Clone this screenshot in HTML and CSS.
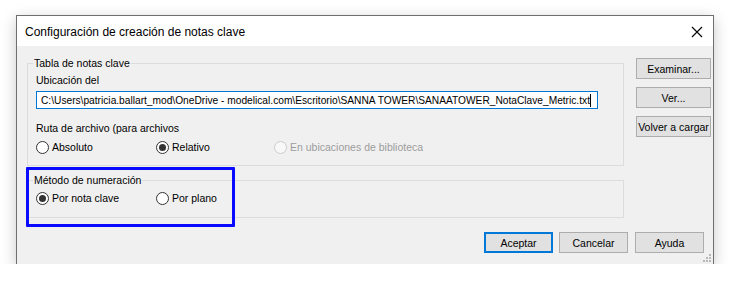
FILE: index.html
```html
<!DOCTYPE html>
<html lang="es">
<head>
    <meta charset="UTF-8">
    <title>Configuración de creación de notas clave</title>
    <link rel="stylesheet" href="styles.css">
</head>
<body>
    <div class="dialog">
        <div class="titlebar">
            <span class="title">Configuración de creación de notas clave</span>
            <svg class="close" width="12" height="12" viewBox="0 0 12 12">
                <path d="M1 1 L11 11 M11 1 L1 11" stroke="#000" stroke-width="1.1" fill="none"/>
            </svg>
        </div>

        <div class="body">
            <div class="main">
                <div class="left">
                    <fieldset class="group group-table">
                        <legend>Tabla de notas clave</legend>
                        <div class="label">Ubicación del</div>
                        <div class="path-input">C:\Users\patricia.ballart_mod\OneDrive - modelical.com\Escritorio\SANNA TOWER\SANAATOWER_NotaClave_Metric.txt<span class="caret"></span></div>
                        <div class="label label-gap">Ruta de archivo (para archivos</div>
                        <div class="radios">
                            <label class="radio"><span class="dot"></span>Absoluto</label>
                            <label class="radio checked"><span class="dot"></span>Relativo</label>
                            <label class="radio disabled"><span class="dot"></span>En ubicaciones de biblioteca</label>
                        </div>
                    </fieldset>

                    <fieldset class="group group-num">
                        <legend>Método de numeración</legend>
                        <div class="radios">
                            <label class="radio checked"><span class="dot"></span>Por nota clave</label>
                            <label class="radio"><span class="dot"></span>Por plano</label>
                        </div>
                    </fieldset>
                </div>

                <div class="side">
                    <button class="btn">Examinar...</button>
                    <button class="btn">Ver...</button>
                    <button class="btn">Volver a cargar</button>
                </div>
            </div>

            <div class="footer">
                <button class="btn btn-default">Aceptar</button>
                <button class="btn">Cancelar</button>
                <button class="btn">Ayuda</button>
            </div>

            <!-- marca de anotación -->
            <div class="highlight"></div>

            <svg class="grip" width="8" height="8" viewBox="0 0 8 8">
                <rect x="6" y="0" width="2" height="2" fill="#b8b8b8"/>
                <rect x="3" y="3" width="2" height="2" fill="#b8b8b8"/>
                <rect x="6" y="3" width="2" height="2" fill="#b8b8b8"/>
                <rect x="0" y="6" width="2" height="2" fill="#b8b8b8"/>
                <rect x="3" y="6" width="2" height="2" fill="#b8b8b8"/>
                <rect x="6" y="6" width="2" height="2" fill="#b8b8b8"/>
            </svg>
        </div>
    </div>
</body>
</html>
```

FILE: styles.css
```css
* {
    margin: 0;
    padding: 0;
    box-sizing: border-box;
}

body {
    font-family: 'Liberation Sans', Arial, sans-serif;
    font-size: 10.5px;
    line-height: 14px;
    color: #000;
    background: #fff;
    padding: 15px 0 0 16px;
}

.dialog {
    width: 698px;
    height: 249px;
    border: 1px solid #6f6f6f;
    border-bottom: none;
    background: #f0f0f0;
    box-shadow: 0 4px 14px rgba(0, 0, 0, 0.22);
    display: flex;
    flex-direction: column;
}

.titlebar {
    height: 30px;
    background: #fff;
    display: flex;
    align-items: center;
    justify-content: space-between;
    padding: 0 10px 0 8px;
}

.title {
    font-size: 12px;
    padding-top: 1px;
}

.close {
    margin-top: 1px;
}

.body {
    position: relative;
    flex: 1;
    padding: 10px 2px 0 10px;
}

.main {
    display: flex;
}

.left {
    width: 597px;
    min-width: 0;
}

.group {
    min-width: 0;
    border: 1px solid #dcdcdc;
    padding: 0 8px;
}

.group legend {
    margin-left: -3px;
    padding: 0 1px;
    line-height: 14px;
}

.group-table {
    padding-top: 3px;
    padding-bottom: 11px;
}

.group-num {
    margin-top: 7px;
    padding-top: 4px;
    padding-bottom: 12px;
}

.label {
    line-height: 14px;
}

.label-gap {
    margin-top: 12px;
}

.path-input {
    margin-top: 4px;
    width: 562px;
    height: 18px;
    border: 1px solid #0078d7;
    background: #fff;
    padding: 1px 4px 0;
    font-size: 10.2px;
    line-height: 15px;
    white-space: nowrap;
    overflow: hidden;
}

.caret {
    display: inline-block;
    width: 1px;
    height: 13px;
    background: #000;
    vertical-align: -3px;
}

.radios {
    display: flex;
    margin-top: 5px;
}

.group-num .radios {
    margin-top: 0;
}

.radio {
    display: flex;
    align-items: center;
    width: 120px;
    flex-shrink: 0;
    white-space: nowrap;
}

.radio + .radio {
    width: 118px;
}

.radio .dot {
    flex-shrink: 0;
    width: 13px;
    height: 13px;
    border: 1px solid #333;
    border-radius: 50%;
    background: #fff;
    margin-right: 3px;
    display: flex;
    align-items: center;
    justify-content: center;
}

.radio.checked .dot::after {
    content: "";
    width: 7px;
    height: 7px;
    border-radius: 50%;
    background: #333;
}

.radio.disabled {
    width: auto;
    color: #9c9c9c;
}

.radio.disabled .dot {
    border-color: #cccccc;
    background: #f8f8f8;
}

.side {
    margin-left: 12px;
    display: flex;
    flex-direction: column;
    gap: 8px;
    padding-top: 2px;
}

.btn {
    font-family: inherit;
    font-size: 10.5px;
    color: #000;
    background: #e1e1e1;
    border: 1px solid #adadad;
    height: 21px;
    width: 75px;
    line-height: 14px;
    white-space: nowrap;
}

.footer {
    display: flex;
    justify-content: flex-end;
    margin-top: 14px;
    padding-right: 7px;
}

.footer .btn {
    width: 69px;
}

.footer .btn + .btn {
    margin-left: 6px;
}

.footer .btn:last-child {
    margin-left: 7px;
}

.btn-default {
    border: 2px solid #0078d7;
}

.highlight {
    position: absolute;
    left: 9px;
    top: 121px;
    width: 209px;
    height: 60px;
    border: 3px solid #0a0aff;
    border-radius: 1px;
}

.grip {
    position: absolute;
    right: 2px;
    bottom: 2px;
}
```
